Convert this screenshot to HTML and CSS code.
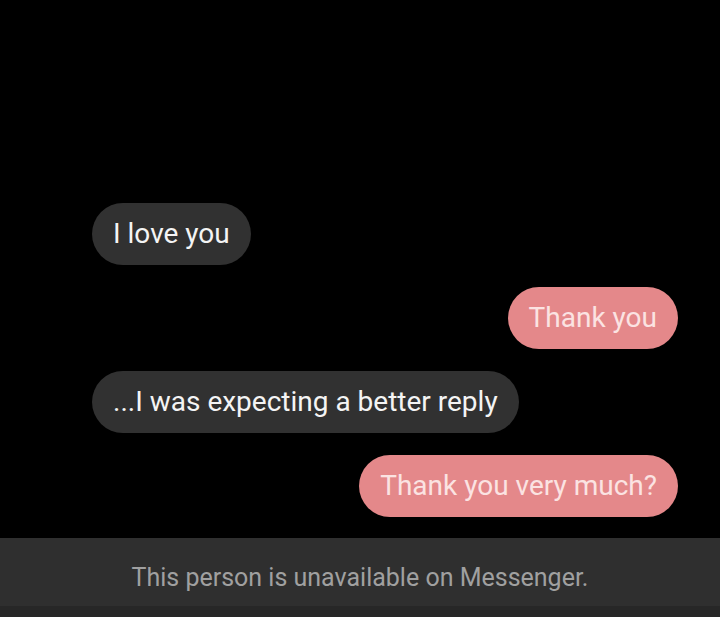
FILE: index.html
```html
<!DOCTYPE html>
<html lang="en">
<head>
<meta charset="utf-8">
<title>Chat</title>
<link rel="stylesheet" href="styles.css">
</head>
<body>
<div class="screen">
  <div class="thread">
    <div class="msg in">I love you</div>
    <div class="msg out">Thank you</div>
    <div class="msg in">...I was expecting a better reply</div>
    <div class="msg out">Thank you very much?</div>
  </div>
  <div class="notice">This person is unavailable on Messenger.</div>
  <div class="footer"></div>
</div>
</body>
</html>
```
FILE: styles.css
```css
html, body {
  margin: 0;
  padding: 0;
  background: #000;
}
.screen {
  width: 720px;
  height: 617px;
  display: flex;
  flex-direction: column;
  justify-content: flex-end;
  font-family: Roboto, "Liberation Sans", sans-serif;
}
.thread {
  display: flex;
  flex-direction: column;
  gap: 22px;
  padding: 0 42px 21px 92px;
}
.msg {
  height: 62px;
  box-sizing: border-box;
  padding: 0 21px 0 21px;
  border-radius: 31px;
  font-size: 28px;
  line-height: 62px;
  white-space: nowrap;
}
.in {
  align-self: flex-start;
  background: #313131;
  color: #f4f4f4;
}
.out {
  align-self: flex-end;
  background: #e4888a;
  color: #fbe3e2;
}
.notice {
  height: 68px;
  box-sizing: border-box;
  padding-top: 10px;
  background: #2f2f2f;
  color: #a0a0a0;
  font-size: 25px;
  display: flex;
  align-items: center;
  justify-content: center;
}
.footer {
  height: 11px;
  background: #272727;
}
```
